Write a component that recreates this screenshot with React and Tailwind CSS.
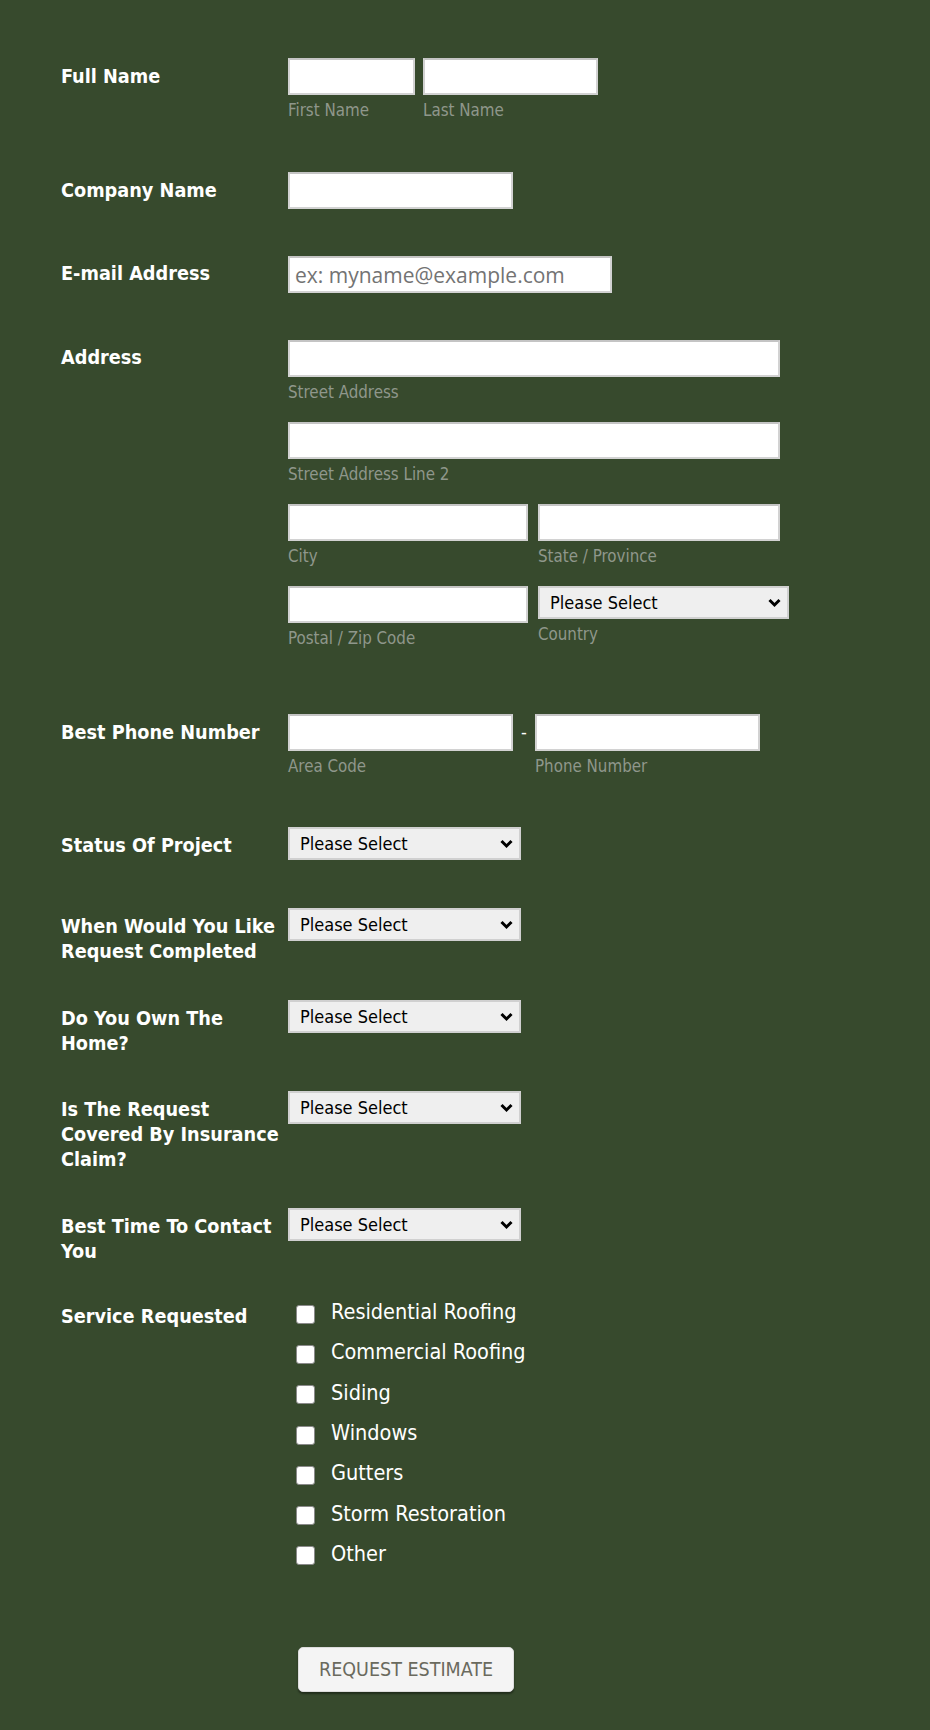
import React from "react";

const font = "font-['DejaVu_Sans_Condensed','DejaVu_Sans',Verdana,sans-serif]";

const Label = ({ children, className = "" }) => (
    <div className={`w-[227px] shrink-0 pr-1 text-[19.7px] font-bold leading-[25px] text-white ${className}`}>
        {children}
    </div>
);

const Sub = ({ children, className = "" }) => (
    <div className={`mt-[5px] text-[16.8px] leading-[20px] text-[#8f978b] ${className}`}>{children}</div>
);

const TextBox = ({ className = "", placeholder }) => (
    <input
        type="text"
        placeholder={placeholder}
        className={`block h-[37px] border-2 border-[#d2d2d2] border-t-[#c4c4c4] bg-white px-[5px] font-['Open_Sans',sans-serif] text-[21px] text-[#333] outline-none placeholder:text-[#737373] ${className}`}
    />
);

const Chevron = () => (
    <svg
        className="pointer-events-none absolute right-[8px] top-1/2 -translate-y-1/2"
        width="13"
        height="9"
        viewBox="0 0 13 9"
        fill="none"
    >
        <path d="M1.5 1.5 6.5 6.5 11.5 1.5" stroke="#000" strokeWidth="3" />
    </svg>
);

const Select = ({ className = "" }) => (
    <div className={`relative h-[33px] ${className}`}>
        <select className="block h-full w-full appearance-none border-2 border-[#d0d0d0] bg-[#efefef] pl-[10px] text-[18px] text-black outline-none">
            <option>Please Select</option>
        </select>
        <Chevron />
    </div>
);

const services = [
    "Residential Roofing",
    "Commercial Roofing",
    "Siding",
    "Windows",
    "Gutters",
    "Storm Restoration",
    "Other",
];

const SelectRow = ({ label, className = "" }) => (
    <div className={`flex items-start ${className}`}>
        <Label className="pt-[6px]">{label}</Label>
        <Select className="w-[233px]" />
    </div>
);

export default function App() {
    return (
        <div className={`min-h-[1730px] bg-[#374a2d] pb-[38px] pl-[61px] pt-[58px] ${font}`}>
            {/* full name */}
            <div className="flex items-start">
                <Label className="pt-[6px]">Full Name</Label>
                <div className="flex gap-[8px]">
                    <div>
                        <TextBox className="w-[127px]" />
                        <Sub>First Name</Sub>
                    </div>
                    <div>
                        <TextBox className="w-[175px]" />
                        <Sub>Last Name</Sub>
                    </div>
                </div>
            </div>

            <div className="mt-[52px] flex items-start">
                <Label className="pt-[6px]">Company Name</Label>
                <TextBox className="w-[225px]" />
            </div>

            <div className="mt-[47px] flex items-start">
                <Label className="pt-[5px]">E-mail Address</Label>
                <TextBox className="w-[324px]" placeholder="ex: myname@example.com" />
            </div>

            {/* address */}
            <div className="mt-[47px] flex items-start">
                <Label className="pt-[5px]">Address</Label>
                <div className="flex w-[501px] flex-col gap-[20px]">
                    <div>
                        <TextBox className="w-[492px]" />
                        <Sub>Street Address</Sub>
                    </div>
                    <div>
                        <TextBox className="w-[492px]" />
                        <Sub>Street Address Line 2</Sub>
                    </div>
                    <div className="flex gap-[10px]">
                        <div>
                            <TextBox className="w-[240px]" />
                            <Sub>City</Sub>
                        </div>
                        <div>
                            <TextBox className="w-[242px]" />
                            <Sub>State / Province</Sub>
                        </div>
                    </div>
                    <div className="flex gap-[10px]">
                        <div>
                            <TextBox className="w-[240px]" />
                            <Sub>Postal / Zip Code</Sub>
                        </div>
                        <div>
                            <Select className="w-[251px]" />
                            <Sub>Country</Sub>
                        </div>
                    </div>
                </div>
            </div>

            {/* phone */}
            <div className="mt-[66px] flex items-start">
                <Label className="pt-[6px]">Best Phone Number</Label>
                <div>
                    <TextBox className="w-[225px]" />
                    <Sub>Area Code</Sub>
                </div>
                <span className="w-[22px] pt-[5px] text-center text-[18px] leading-[25px] text-white">-</span>
                <div>
                    <TextBox className="w-[225px]" />
                    <Sub>Phone Number</Sub>
                </div>
            </div>

            <SelectRow className="mt-[51px]" label="Status Of Project" />
            <SelectRow className="mt-[48px]" label="When Would You Like Request Completed" />
            <SelectRow className="mt-[36px]" label="Do You Own The Home?" />
            <SelectRow className="mt-[35px]" label="Is The Request Covered By Insurance Claim?" />
            <SelectRow className="mt-[36px]" label="Best Time To Contact You" />

            {/* services */}
            <div className="mt-[28px] flex items-start">
                <Label className="pt-[12px]">Service Requested</Label>
                <div className="flex flex-col">
                    {services.map((s) => (
                        <label key={s} className="flex h-[40.3px] items-center">
                            <input
                                type="checkbox"
                                className="ml-[8px] mt-[4px] h-[19px] w-[19px] shrink-0 appearance-none rounded-[3px] border border-[#8a8a8a] bg-white"
                            />
                            <span className="ml-[16px] text-[21.5px] leading-[26px] text-white">{s}</span>
                        </label>
                    ))}
                </div>
            </div>

            <div className="mt-[73px] pl-[237px]">
                <button className="h-[45px] w-[216px] rounded-[5px] border border-[#dcdcdc] bg-[#f4f4f4] text-[19.5px] text-[#6a6a5e] shadow-[0_2px_2px_rgba(0,0,0,0.4)]">
                    REQUEST ESTIMATE
                </button>
            </div>
        </div>
    );
}
